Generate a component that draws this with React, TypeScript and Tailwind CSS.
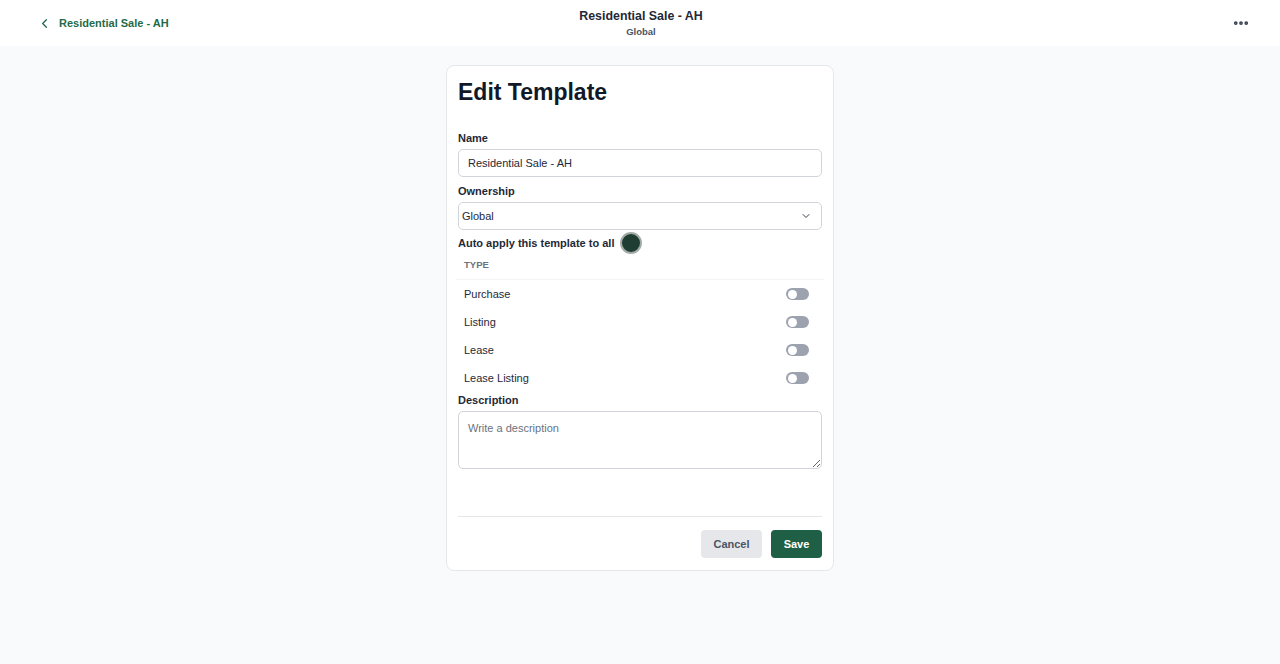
import { ChevronLeft, ChevronDown, MoreHorizontal } from "lucide-react"

const types = ["Purchase", "Listing", "Lease", "Lease Listing"]

function Toggle() {
  return (
    <div className="flex h-[12px] w-[23px] items-center rounded-full bg-[#9ca3af] px-[2px]">
      <div className="h-[9px] w-[9px] rounded-full bg-white" />
    </div>
  )
}

export default function App() {
  return (
    <div className="min-h-screen bg-[#f9fafb] font-['Liberation_Sans',Arial,sans-serif] text-[#111827]">
      {/* Header */}
      <header className="grid h-[46px] grid-cols-[1fr_auto_1fr] items-center bg-white pl-[37px] pr-[30px]">
        <div className="flex items-center gap-[7px] text-[11px] font-bold text-[#1f6b4a]">
          <ChevronLeft size={15} strokeWidth={2} className="text-[#1f6b4a]" />
          <span>Residential Sale - AH</span>
        </div>
        <div className="ml-[-5px] flex flex-col items-center">
          <span className="text-[12.4px] font-bold leading-[16px] text-[#1f2937]">Residential Sale - AH</span>
          <span className="mt-[2px] text-[9.5px] font-bold leading-[12px] text-[#4b5563]">Global</span>
        </div>
        <div className="flex justify-end">
          <MoreHorizontal size={18} strokeWidth={3} className="text-[#374151]" />
        </div>
      </header>

      {/* Card */}
      <div className="flex justify-center pt-[19px]">
        <div className="w-[388px] rounded-[8px] border border-[#e5e7eb] bg-white px-[11px] pb-[12px] pt-[10px]">
          <h1 className="text-[23px] font-bold leading-[32px] text-[#111827]">Edit Template</h1>

          <div className="mt-[23px] text-[11px] font-bold leading-[14px] text-[#1f2937]">Name</div>
          <div className="mt-[4px] flex h-[28px] items-center rounded-[5px] border border-[#d1d5db] px-[9px] text-[11px] text-[#1f2937]">
            Residential Sale - AH
          </div>

          <div className="mt-[7px] text-[11px] font-bold leading-[14px] text-[#1f2937]">Ownership</div>
          <div className="mt-[4px] flex h-[28px] items-center justify-between rounded-[5px] border border-[#d1d5db] pl-[3px] pr-[9px] text-[11px] text-[#1f2937]">
            <span>Global</span>
            <ChevronDown size={12} strokeWidth={2} className="text-[#374151]" />
          </div>

          <div className="mt-[1px] flex h-[24px] items-center gap-[6px]">
            <span className="text-[11px] font-bold text-[#1f2937]">Auto apply this template to all</span>
            <div className="h-[22px] w-[22px] rounded-full border-[2px] border-[#a3aba6] bg-[#1f3d33]" />
          </div>

          <div className="-mx-[2px] mt-[4px]">
            <div className="border-b border-[#f3f4f6] px-[8px] pb-[8px] text-[9.5px] font-semibold uppercase leading-[12px] text-[#6b7280]">
              Type
            </div>
            {types.map((t) => (
              <div key={t} className="flex h-[28px] items-center justify-between pl-[8px] pr-[15px] text-[11px] text-[#1f2937]">
                <span>{t}</span>
                <Toggle />
              </div>
            ))}
          </div>

          <div className="mt-[1px] text-[11px] font-bold leading-[14px] text-[#1f2937]">Description</div>
          <textarea
            placeholder="Write a description"
            className="mt-[4px] block h-[58px] w-full resize-y rounded-[5px] border border-[#d1d5db] px-[9px] py-[8px] text-[11px] text-[#1f2937] placeholder:text-[#6b7280] outline-none"
          />

          <div className="mt-[47px] border-t border-[#e5e7eb]" />
          <div className="mt-[13px] flex justify-end gap-[9px]">
            <button className="h-[28px] w-[61px] rounded-[4px] bg-[#e5e7eb] text-[11px] font-bold text-[#4b5563]">
              Cancel
            </button>
            <button className="h-[28px] w-[51px] rounded-[4px] bg-[#1f5f45] text-[11px] font-bold text-white">
              Save
            </button>
          </div>
        </div>
      </div>
    </div>
  )
}
